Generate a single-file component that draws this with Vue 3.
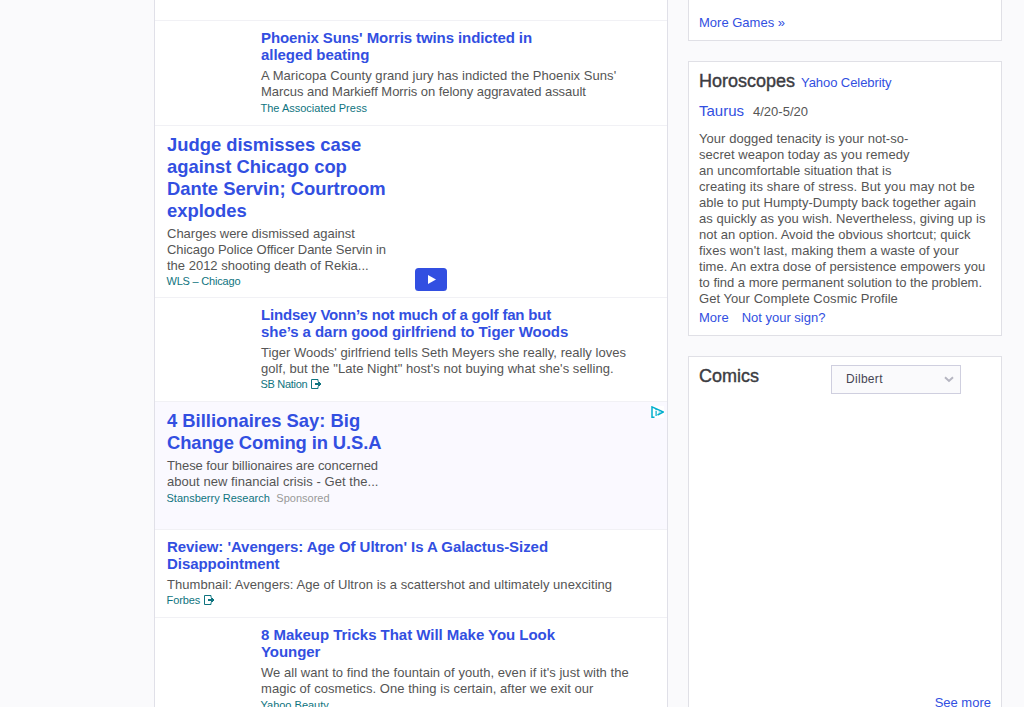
<script setup>
const stories = [
  { kind: 'thumb', title: ["Phoenix Suns' Morris twins indicted in", 'alleged beating'], text: ["A Maricopa County grand jury has indicted the Phoenix Suns'", 'Marcus and Markieff Morris on felony aggravated assault'], source: 'The Associated Press' },
  { kind: 'large', video: true, title: ['Judge dismisses case', 'against Chicago cop', 'Dante Servin; Courtroom', 'explodes'], text: ['Charges were dismissed against', 'Chicago Police Officer Dante Servin in', 'the 2012 shooting death of Rekia...'], source: 'WLS – Chicago' },
  { kind: 'thumb', title: ['Lindsey Vonn’s not much of a golf fan but', 'she’s a darn good girlfriend to Tiger Woods'], text: ["Tiger Woods' girlfriend tells Seth Meyers she really, really loves", "golf, but the \"Late Night\" host's not buying what she's selling."], source: 'SB Nation', external: true },
  { kind: 'large', ad: true, title: ['4 Billionaires Say: Big', 'Change Coming in U.S.A'], text: ['These four billionaires are concerned', 'about new financial crisis - Get the...'], source: 'Stansberry Research' },
  { kind: 'plain', title: ["Review: 'Avengers: Age Of Ultron' Is A Galactus-Sized", 'Disappointment'], text: ['Thumbnail: Avengers: Age of Ultron is a scattershot and ultimately unexciting'], source: 'Forbes', external: true },
  { kind: 'thumb', title: ['8 Makeup Tricks That Will Make You Look', 'Younger'], text: ["We all want to find the fountain of youth, even if it's just with the", 'magic of cosmetics. One thing is certain, after we exit our'], source: 'Yahoo Beauty' }
]
const horoscope = [
  'Your dogged tenacity is your not-so-',
  'secret weapon today as you remedy',
  'an uncomfortable situation that is',
  'creating its share of stress. But you may not be',
  'able to put Humpty-Dumpty back together again',
  'as quickly as you wish. Nevertheless, giving up is',
  'not an option. Avoid the obvious shortcut; quick',
  "fixes won't last, making them a waste of your",
  'time. An extra dose of persistence empowers you',
  'to find a more permanent solution to the problem.',
  'Get Your Complete Cosmic Profile'
]
</script>

<template>
  <div class="page">
    <main class="stream">
      <div class="previous"></div>
      <article v-for="(s, i) in stories" :key="i" class="story" :class="[s.kind, `story-${i + 1}`, { sponsored: s.ad }]">
        <h3 class="title"><span v-for="(l, k) in s.title" :key="k">{{ l }}</span></h3>
        <p class="text"><span v-for="(l, k) in s.text" :key="k">{{ l }}</span></p>
        <div class="source">
          <span>{{ s.source }}</span>
          <span v-if="s.ad" class="sponsor">Sponsored</span>
          <svg v-if="s.external" class="external" width="11" height="10" viewBox="0 0 11 10">
            <path d="M7 2.500V.5H.5v9H7v-2" fill="none" stroke="#0f7480" />
            <path d="M4 4h3V2.500h1V3h1v1h1v2H9v1H8v.5H7V6H4z" fill="#0f7480" />
          </svg>
        </div>
        <svg v-if="s.video" class="play" width="32" height="23" viewBox="0 0 32 23">
          <rect width="32" height="23" rx="3.500" fill="#324fe1" />
          <path d="M13 7l8 4.500-8 4.500z" fill="#fff" />
        </svg>
        <svg v-if="s.ad" class="choice" width="13" height="12" viewBox="0 0 13 12">
          <rect width="13" height="12" fill="#fff" />
          <path d="M3.500 11.200H1V.9L12.200 6 6.500 9" fill="none" stroke="#00aecd" stroke-width="1.500" />
          <path d="M4.500 3h1.200v1.200H4.500zM4.500 5h1.200v5H4.500z" fill="#00aecd" />
          <path d="M7 4.500L9.500 6 7 7.500" fill="none" stroke="#7fd6e6" stroke-width=".8" />
        </svg>
      </article>
    </main>
    <aside class="rail">
      <section class="card games"><a>More Games »</a></section>
      <section class="card horoscopes">
        <header><h2>Horoscopes</h2><a>Yahoo Celebrity</a></header>
        <div class="sign"><a>Taurus</a><span>4/20-5/20</span></div>
        <p class="text"><span v-for="(l, k) in horoscope" :key="k">{{ l }}</span></p>
        <div class="links"><a>More</a><a>Not your sign?</a></div>
      </section>
      <section class="card comics">
        <header>
          <h2>Comics</h2>
          <div class="select">
            <span>Dilbert</span>
            <svg width="10" height="7" viewBox="0 0 10 7"><path d="M1 1.300l4 3.700 4-3.700" fill="none" stroke="#b5b5c1" stroke-width="2" /></svg>
          </div>
        </header>
        <a class="see">See more</a>
      </section>
    </aside>
  </div>
</template>

<style>
body { margin: 0; overflow: hidden; background: #fafafc; }
</style>

<style scoped>
* { box-sizing: border-box; }
.page { display: flex; gap: 20px; height: 707px; overflow: hidden; padding-left: 154px; font: 13px/16px "Liberation Sans", Arial, sans-serif; color: #555; background: #fafafc; }
h2, h3, p { margin: 0; }
a { color: #324fe1; }
.stream { width: 514px; flex: none; border: solid #e0e0e8; border-width: 0 1px; background: #fff; }
.previous { height: 20px; }
.story { position: relative; border-top: 1px solid #f1f1f5; padding: 8px 0 0 12px; white-space: nowrap; }
.story.thumb { padding-left: 106px; }
.title { color: #324fe1; font-size: 15px; line-height: 17px; font-weight: bold; letter-spacing: -.06px; }
.title span, .text span { display: block; width: max-content; }
.large .title { font-size: 18.4px; line-height: 22px; letter-spacing: 0; }
.text { margin-top: 5px; letter-spacing: .05px; }
.large .text { margin-top: 4px; }
.source { display: flex; align-items: center; height: 16px; margin-left: -.5px; font-size: 11px; color: #0f7480; }
.external { margin-left: 4px; }
.sponsor { margin-left: 6.500px; color: #999; }
.sponsored { background: #faf9ff; }
.story-1 { height: 105px; }
.story-2 { height: 172px; }
.story-3 { height: 104px; }
.story-4 { height: 128px; }
.story-5 { height: 88px; }
.story-6 { height: 105px; }
.story-2 .source, .story-3 .source, .story-5 .source { margin-top: -1px; }
.story-2 .source { letter-spacing: -.2px; }
.story-3 .source { letter-spacing: -.3px; }
.story-5 .source { letter-spacing: -.08px; }
.story-1 .title span:first-child { letter-spacing: -.09px; }
.story-3 .title span:first-child { letter-spacing: -.18px; }
.story-4 .title span:last-child { letter-spacing: -.1px; }
.story-6 .title span:first-child { letter-spacing: -.03px; }
.story-1 .text span:last-child { letter-spacing: -.04px; }
.story-2 .text { letter-spacing: 0; }
.story-2 .text span:nth-child(2) { letter-spacing: -.05px; }
.story-3 .text span:first-child { letter-spacing: .035px; }
.story-4 .text span:first-child { letter-spacing: -.08px; }
.play { position: absolute; left: 260px; bottom: 6px; }
.choice { position: absolute; right: 3px; top: 4px; }
.rail { width: 314px; height: 708px; flex: none; display: flex; flex-direction: column; gap: 20px; }
.card { background: #fff; border: 1px solid #e0e0e6; padding: 0 10px; white-space: nowrap; }
.games { height: 41px; border-top: 0; padding-top: 15px; }
.horoscopes { height: 275px; padding-top: 8px; }
.horoscopes header a { letter-spacing: -.07px; }
.horoscopes .text { margin-top: 0; }
.horoscopes .text span:nth-child(4) { letter-spacing: .1px; }
.horoscopes .text span:nth-child(5) { letter-spacing: .02px; }
.horoscopes .text span:nth-child(7) { letter-spacing: 0; }
.horoscopes .text span:nth-child(10) { letter-spacing: -.02px; }
h2 { color: #3c3c42; font-size: 18px; line-height: 22px; font-weight: normal; -webkit-text-stroke: .4px #3c3c42; }
header { display: flex; align-items: baseline; gap: 6px; height: 22px; }
.sign { display: flex; align-items: baseline; gap: 9px; height: 20px; margin: 10px 0 9px; }
.sign a { font-size: 15px; line-height: 18px; }
.links { display: flex; gap: 13px; margin-top: 3px; }
.comics { flex: 1; display: flex; flex-direction: column; justify-content: space-between; padding-top: 8px; }
.comics header { justify-content: space-between; padding-right: 30px; align-items: flex-start; }
.select { display: flex; align-items: center; justify-content: space-between; width: 130px; height: 29px; padding: 0 6px 0 14px; border: 1px solid #cfcfdf; background: #fafafc; color: #454553; font-size: 12px; letter-spacing: .3px; }
.select span { margin-top: -2px; }
.see { align-self: flex-end; margin-bottom: -4px; }
</style>
